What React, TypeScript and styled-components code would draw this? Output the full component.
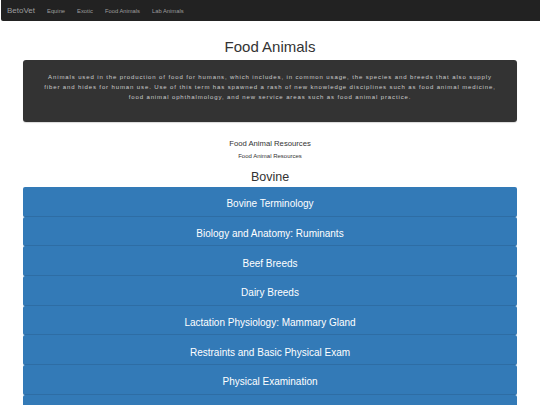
import React from "react";
import styled, { createGlobalStyle } from "styled-components";

const Global = createGlobalStyle`
  html, body { margin: 0; padding: 0; background: #fff; }
  body { font-family: "Liberation Sans", Arial, Helvetica, sans-serif; color: #333; }
`;

const Nav = styled.nav`
  display: flex;
  align-items: center;
  height: 21px;
  margin-left: 1px;
  background: #222;
  border-bottom-left-radius: 2px;
  padding-left: 6px;
`;

const Brand = styled.span`
  font-size: 8px;
  color: #9d9d9d;
  margin-right: 6px;
`;

const NavLink = styled.a`
  font-size: 5.8px;
  color: #9d9d9d;
  padding: 0 6px;
  text-decoration: none;
`;

const Container = styled.main`
  padding: 0 23px;
  display: flex;
  flex-direction: column;
  align-items: stretch;
`;

const Title = styled.h1`
  margin: 15px 0 0;
  font-size: 15px;
  font-weight: 400;
  line-height: 22px;
  text-align: center;
  color: #333;
`;

const Panel = styled.div`
  margin-top: 2px;
  background: #333;
  border-radius: 3px;
  box-shadow: 0 1px 1px rgba(0, 0, 0, 0.15);
  padding: 11.5px 10px 0;
  height: 62px;
  box-sizing: border-box;
`;

const PanelText = styled.p`
  margin: 0;
  font-size: 6px;
  line-height: 10.3px;
  letter-spacing: 0.88px;
  text-align: center;
  white-space: nowrap;
  color: #cccccc;
`;

const Resource = styled.div<{ $size: number; $mt: number }>`
  margin-top: ${(p) => p.$mt}px;
  font-size: ${(p) => p.$size}px;
  line-height: ${(p) => Math.round(p.$size) + 3}px;
  text-align: center;
  color: #333;
`;

const Section = styled.h2`
  margin: 8px 0 0;
  font-size: 12.5px;
  font-weight: 400;
  line-height: 17px;
  text-align: center;
  color: #333;
`;

const List = styled.div`
  margin-top: 1px;
  display: flex;
  flex-direction: column;
`;

const Item = styled.a`
  display: flex;
  align-items: center;
  justify-content: center;
  height: 29.7px;
  padding-top: 5px;
  box-sizing: border-box;
  background: #337ab7;
  border-bottom: 1px solid #2e6da4;
  border-radius: 2px;
  color: #fff;
  font-size: 10px;
  text-decoration: none;
`;

const items = [
  "Bovine Terminology",
  "Biology and Anatomy: Ruminants",
  "Beef Breeds",
  "Dairy Breeds",
  "Lactation Physiology: Mammary Gland",
  "Restraints and Basic Physical Exam",
  "Physical Examination",
  "Bovine Diseases",
];

export default function App() {
  return (
    <>
      <Global />
      <Nav>
        <Brand>BetoVet</Brand>
        <NavLink>Equine</NavLink>
        <NavLink>Exotic</NavLink>
        <NavLink>Food Animals</NavLink>
        <NavLink>Lab Animals</NavLink>
      </Nav>
      <Container>
        <Title>Food Animals</Title>
        <Panel>
          <PanelText>
            Animals used in the production of food for humans, which includes, in common usage, the species and breeds
            that also supply
            <br />
            fiber and hides for human use. Use of this term has spawned a rash of new knowledge disciplines such as food
            animal medicine,
            <br />
            food animal ophthalmology, and new service areas such as food animal practice.
          </PanelText>
        </Panel>
        <Resource $size={7.7} $mt={16}>Food Animal Resources</Resource>
        <Resource $size={6} $mt={3}>Food Animal Resources</Resource>
        <Section>Bovine</Section>
        <List>
          {items.map((t) => (
            <Item key={t}>{t}</Item>
          ))}
        </List>
      </Container>
    </>
  );
}
